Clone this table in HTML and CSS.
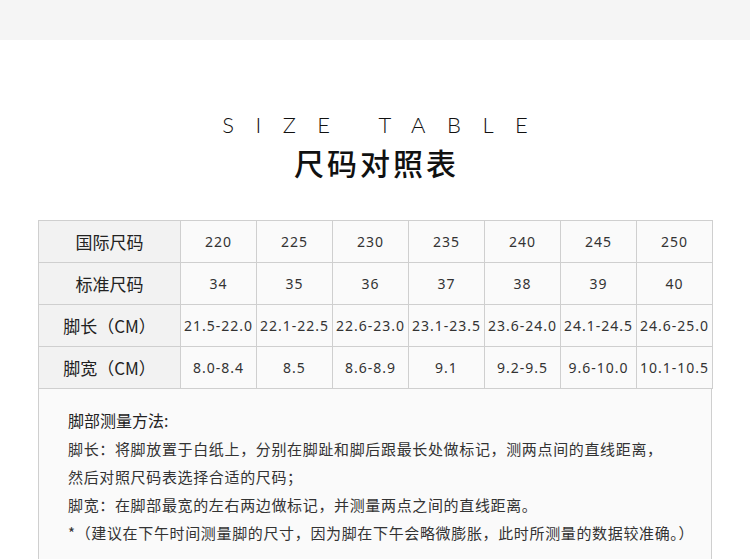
FILE: index.html
```html
<!DOCTYPE html>
<html lang="zh">
<head>
<meta charset="utf-8">
<link rel="stylesheet" href="styles.css">
</head>
<body>
<div class="topband"></div>
<div class="titles">
  <div class="en">SIZE TABLE</div>
  <div class="zh">尺码对照表</div>
</div>
<div class="wrap">
  <table class="size">
    <colgroup><col class="c0"><col><col><col><col><col><col><col></colgroup>
    <tr><th>国际尺码</th><td>220</td><td>225</td><td>230</td><td>235</td><td>240</td><td>245</td><td>250</td></tr>
    <tr><th>标准尺码</th><td>34</td><td>35</td><td>36</td><td>37</td><td>38</td><td>39</td><td>40</td></tr>
    <tr><th>脚长（CM）</th><td>21.5-22.0</td><td>22.1-22.5</td><td>22.6-23.0</td><td>23.1-23.5</td><td>23.6-24.0</td><td>24.1-24.5</td><td>24.6-25.0</td></tr>
    <tr><th>脚宽（CM）</th><td>8.0-8.4</td><td>8.5</td><td>8.6-8.9</td><td>9.1</td><td>9.2-9.5</td><td>9.6-10.0</td><td>10.1-10.5</td></tr>
  </table>
  <div class="notes">
    <div class="nh">脚部测量方法:</div>
    <p>脚长：将脚放置于白纸上，分别在脚趾和脚后跟最长处做标记，测两点间的直线距离，</p>
    <p>然后对照尺码表选择合适的尺码；</p>
    <p>脚宽：在脚部最宽的左右两边做标记，并测量两点之间的直线距离。</p>
    <p>*（建议在下午时间测量脚的尺寸，因为脚在下午会略微膨胀，此时所测量的数据较准确。）</p>
  </div>
</div>
</body>
</html>
```
FILE: styles.css
```css
html, body {
  margin: 0;
  padding: 0;
  background: #ffffff;
  font-family: "Noto Sans", "Noto Sans CJK SC", sans-serif;
  color: #222;
  overflow: hidden;
}
.topband {
  height: 40px;
  background: #f5f5f5;
}
.titles {
  text-align: center;
  padding-top: 73px;
}
.en {
  font-family: "Lato", "Open Sans", sans-serif;
  font-weight: 300;
  font-size: 22px;
  line-height: 24px;
  letter-spacing: 21.5px;
  padding-left: 21.5px;
  color: #111;
}
.zh {
  font-family: "Noto Sans CJK SC", sans-serif;
  font-weight: 500;
  font-size: 30px;
  line-height: 40px;
  letter-spacing: 3px;
  padding-left: 3px;
  margin-top: 5px;
  color: #111;
}
.wrap {
  margin: 38px 38px 0 38px;
  width: 674px;
}
table.size {
  border-collapse: collapse;
  width: 674px;
  table-layout: fixed;
}
col { width: 76px; }
col.c0 { width: 142px; }
.size th, .size td {
  border: 1px solid #cfcfcf;
  height: 41px;
  padding: 0;
  text-align: center;
  vertical-align: middle;
  white-space: nowrap;
}
.size th {
  background: #f2f2f2;
  font-family: "Noto Sans CJK SC", sans-serif;
  font-weight: 400;
  font-size: 17px;
  color: #222;
}
.size td {
  background: #fafafa;
  font-size: 14px;
  letter-spacing: 1px;
  color: #333;
}
.notes {
  background: #fafafa;
  border-left: 1px solid #cfcfcf;
  border-right: 1px solid #cfcfcf;
  padding: 17px 0 20px 29px;
  height: 200px;
  font-family: "Noto Sans CJK SC", sans-serif;
  color: #333;
}
.nh {
  font-size: 16px;
  line-height: 28px;
  margin-bottom: 1px;
  color: #222;
}
.notes p {
  margin: 0;
  font-size: 15px;
  line-height: 28px;
  letter-spacing: 0.65px;
}
```
